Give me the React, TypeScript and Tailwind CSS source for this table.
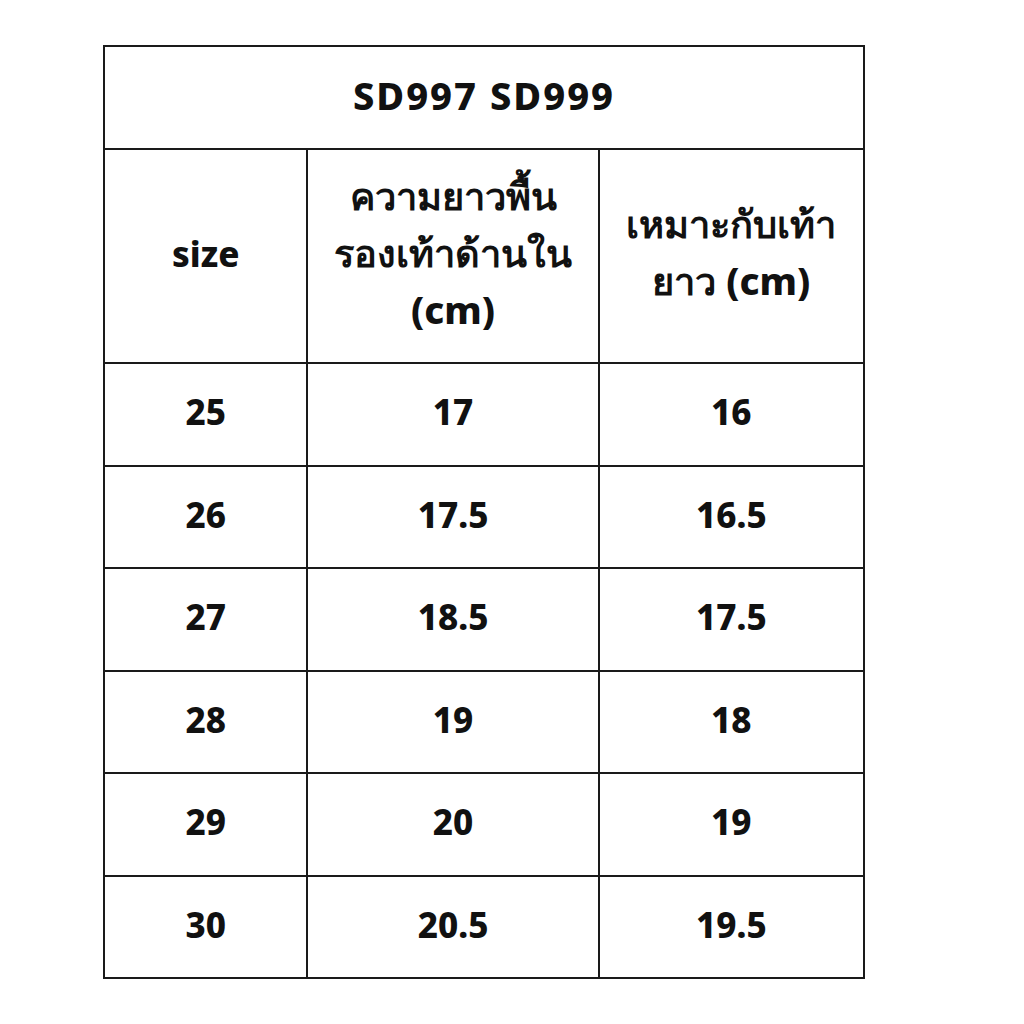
const rows = [
  ["25", "17", "16"],
  ["26", "17.5", "16.5"],
  ["27", "18.5", "17.5"],
  ["28", "19", "18"],
  ["29", "20", "19"],
  ["30", "20.5", "19.5"],
];

export default function App() {
  return (
    <div className="w-[1024px] h-[1024px] bg-white pt-[45px] pl-[103px]">
      <table
        className="border-collapse w-[762px] text-[#111] font-extrabold text-[35px] text-center"
        style={{ fontFamily: '"Noto Sans", "Noto Sans CJK SC", sans-serif' }}
      >
        <colgroup>
          <col className="w-[204px]" />
          <col className="w-[292px]" />
          <col className="w-[266px]" />
        </colgroup>
        <tbody>
          <tr className="h-[103px]">
            <td colSpan={3} className="border-2 border-[#1a1a1a] text-[38px] tracking-[2px] pb-[4px]">
              SD997 SD999
            </td>
          </tr>
          <tr className="h-[214px]">
            <td className="border-2 border-[#1a1a1a] pb-[4px]">size</td>
            <td className="border-2 border-[#1a1a1a] leading-[57px] text-[38px] pb-[8px]">
              ความยาวพื้น
              <br />
              รองเท้าด้านใน
              <br />
              (cm)
            </td>
            <td className="border-2 border-[#1a1a1a] leading-[57px] text-[38px] pb-[8px]">
              เหมาะกับเท้า
              <br />
              ยาว (cm)
            </td>
          </tr>
          {rows.map((r) => (
            <tr key={r[0]} className="h-[102.5px]">
              {r.map((c, i) => (
                <td key={i} className="border-2 border-[#1a1a1a] pb-[4px]">
                  {c}
                </td>
              ))}
            </tr>
          ))}
        </tbody>
      </table>
    </div>
  );
}
